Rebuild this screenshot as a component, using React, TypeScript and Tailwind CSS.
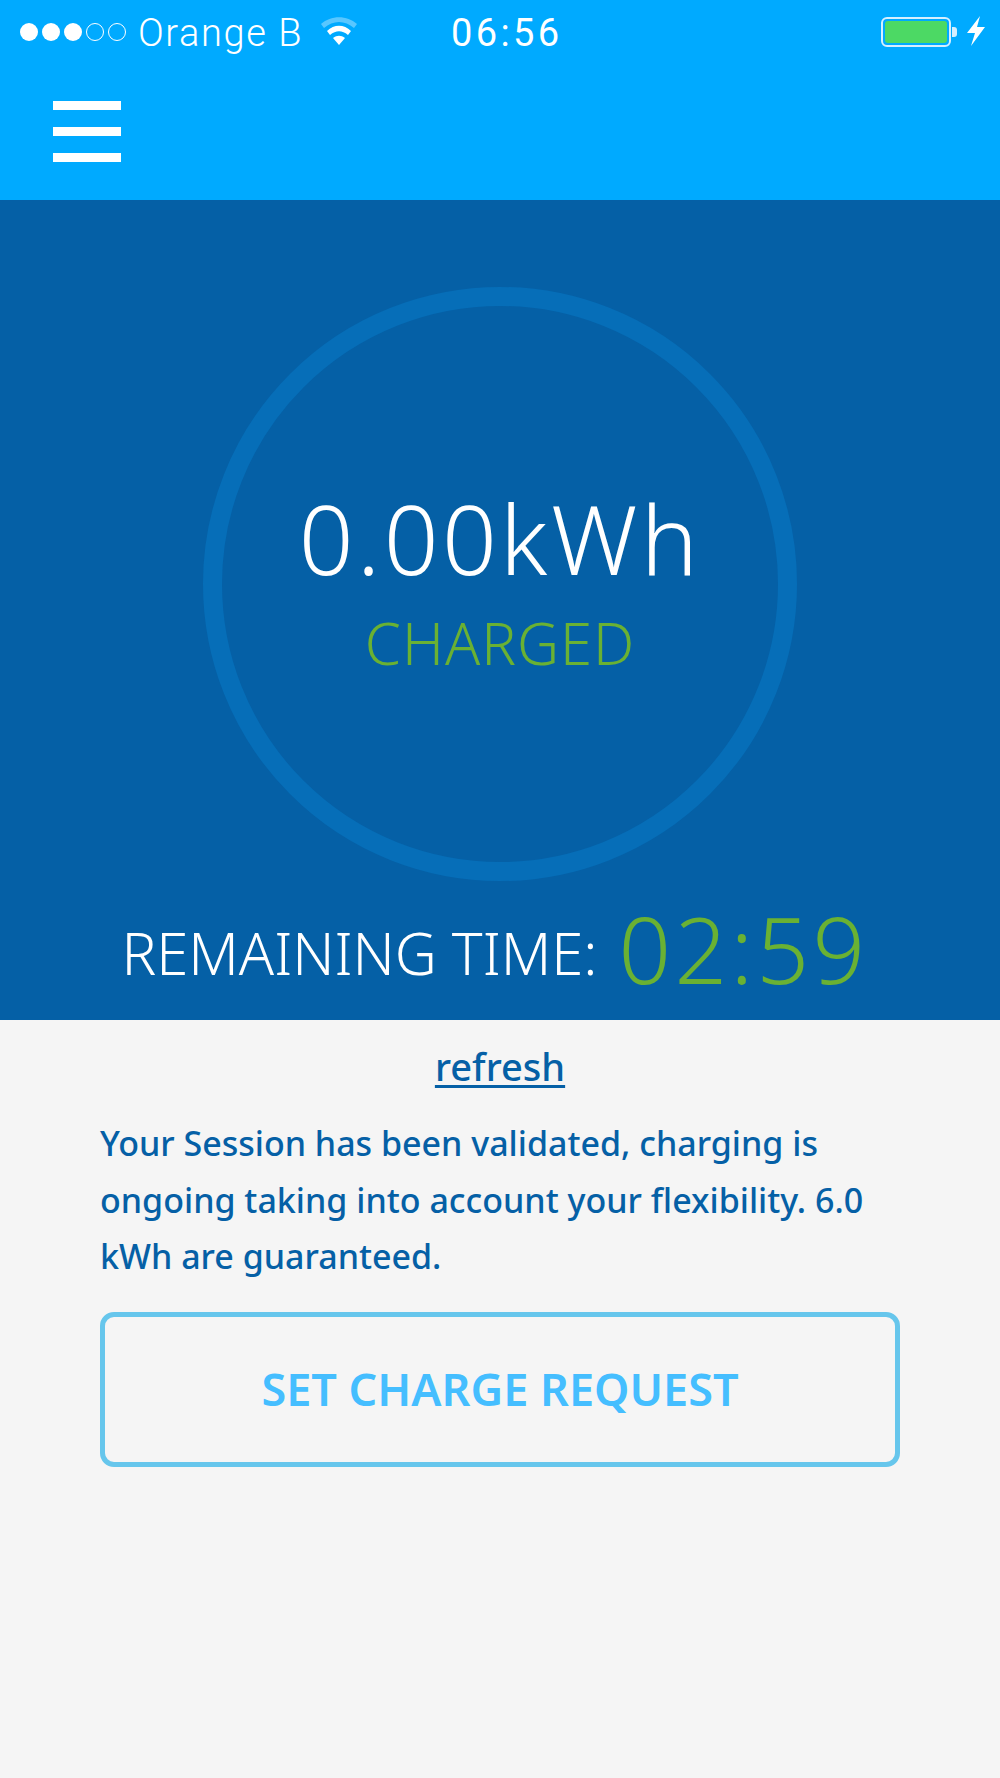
const StatusBar = () => {
  return (
    <div className="flex h-[62px] items-start font-['Roboto',sans-serif] text-white">
      <div className="ml-5 mt-[23px] flex gap-1">
        <span className="h-[18px] w-[18px] rounded-full bg-white" />
        <span className="h-[18px] w-[18px] rounded-full bg-white" />
        <span className="h-[18px] w-[18px] rounded-full bg-white" />
        <span className="h-[18px] w-[18px] rounded-full border-[1.5px] border-white" />
        <span className="h-[18px] w-[18px] rounded-full border-[1.5px] border-white" />
      </div>
      <span className="ml-[12px] mt-[12px] w-[182px] text-[38px] leading-[42px] font-light tracking-[1.6px]">Orange B</span>
      <svg className="mt-[16px]" width="38" height="30" viewBox="0 0 38 30">
        <path d="M1 8 C11 -1 27 -1 37 8 L34 12 C25 4 13 4 4 12 Z" fill="#ffffff" fillOpacity="0.35" />
        <path d="M7 15 C14 8 24 8 31 15 L28 19 C22 14 16 14 10 19 Z" fill="#ffffff" />
        <path d="M13 22 C17 19 21 19 25 22 L19 29 Z" fill="#ffffff" />
      </svg>
      <span className="ml-[93px] mt-[12px] text-[38px] leading-[42px] font-normal tracking-[3.4px]">06:56</span>
      <div className="ml-auto mt-[17px] flex items-center">
        <div className="h-[30px] w-[70px] rounded-[6px] border-2 border-[#d5efff] p-[2px]">
          <div className="h-full w-full rounded-[3px] bg-[#4cd964]" />
        </div>
        <div className="ml-[1px] h-[10px] w-[5px] rounded-r-[3px] bg-[#d5efff]" />
      </div>
      <svg className="ml-[10px] mr-[15px] mt-[16px]" width="18" height="30" viewBox="0 0 18 30">
        <path d="M13 0 L0 17 L8 17 L4 30 L18 11 L10 11 Z" fill="#ffffff" />
      </svg>
    </div>
  )
}

export default function App() {
  return (
    <div className="flex min-h-[1778px] w-[1000px] flex-col bg-[#f5f5f5] font-['Noto_Sans',sans-serif]">
      {/* Cabecera */}
      <header className="h-[200px] bg-[#00aaff]">
        <StatusBar />
        <div className="ml-[53px] mt-[39px] flex w-[68px] flex-col gap-[17px]">
          <span className="h-[9px] bg-white" />
          <span className="h-[9px] bg-white" />
          <span className="h-[9px] bg-white" />
        </div>
      </header>

      {/* Contador de carga */}
      <section className="flex h-[820px] flex-col items-center bg-[#0560a6] pt-[87px]">
        <div className="flex h-[594px] w-[594px] flex-col items-center rounded-full border-[19px] border-[#066eb8] pt-[177px]">
          <div className="text-[96px] leading-[110px] font-light tracking-[3.4px] text-white">0.00kWh</div>
          <div className="mt-[15px] text-[58px] leading-[70px] font-light tracking-[1px] text-[#6ab133]">CHARGED</div>
        </div>
        <div className="mr-[10px] mt-[22px] flex items-start text-white">
          <span className="text-[58px] leading-[100px] font-light">REMAINING TIME:</span>
          <span className="ml-[21px] -mt-[4px] text-[92px] leading-[100px] font-light tracking-[3.5px] text-[#6ab133]">02:59</span>
        </div>
      </section>

      {/* Estado de la sesión */}
      <section className="px-[100px] text-[#0560a6]">
        <div className="mt-[21px] text-center text-[38px] leading-[50px] font-medium underline underline-offset-4">
          <a href="#">refresh</a>
        </div>
        <p className="mt-[24px] text-[34px] leading-[56.5px] font-medium">
          Your Session has been validated, charging is ongoing taking into account your flexibility. 6.0 kWh are guaranteed.
        </p>
        <button className="mt-[27px] flex h-[155px] w-full items-center justify-center rounded-[14px] border-[5px] border-[#66c6ec] text-[45px] font-semibold text-[#45beff]">
          SET CHARGE REQUEST
        </button>
      </section>
    </div>
  )
}
